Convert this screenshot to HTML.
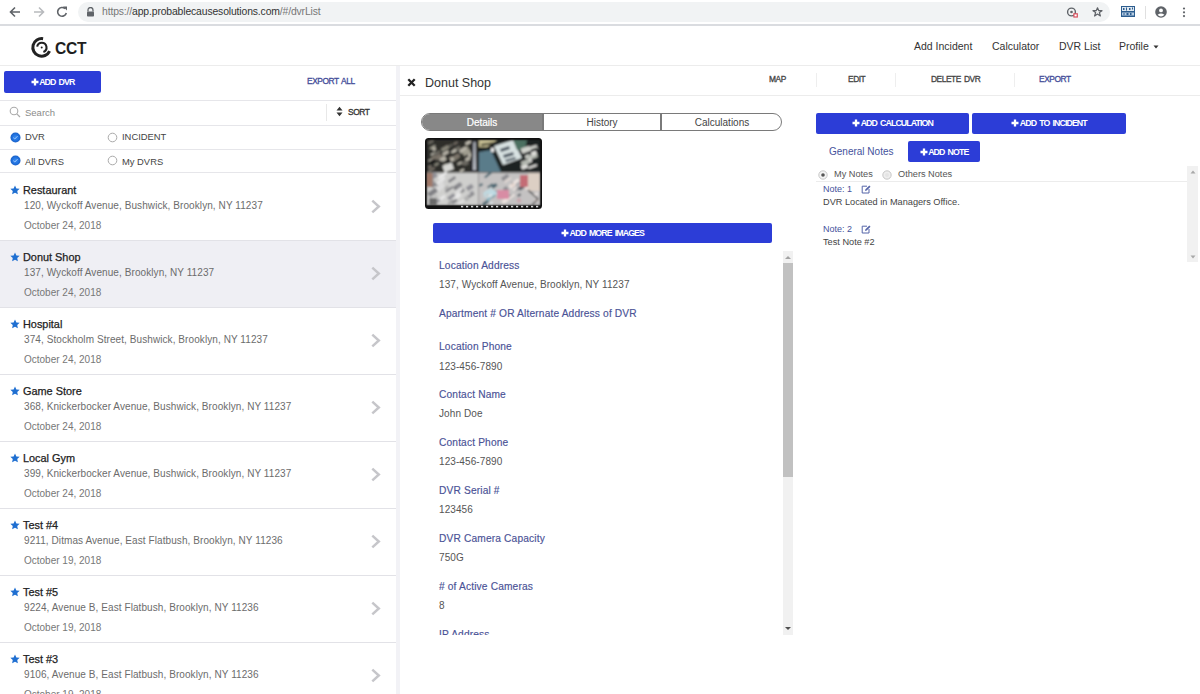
<!DOCTYPE html>
<html><head><meta charset="utf-8">
<style>
*{box-sizing:border-box;margin:0;padding:0}
html,body{width:1200px;height:694px;overflow:hidden;background:#fff;font-family:"Liberation Sans",sans-serif;color:#333}
.a{position:absolute;white-space:nowrap}
.hl{position:absolute;height:1px;background:#e6e6ea}
.vl{position:absolute;width:1px;background:#e8e8e8}
.btn{position:absolute;background:#2c3dd7;border-radius:2px;color:#fff;font-weight:bold;font-size:8.8px;text-align:center;letter-spacing:-0.92px;word-spacing:1.6px}
.pls{display:inline-block;margin-right:0.5px;vertical-align:-0.5px}
.row{position:absolute;left:0;width:396px;height:67px;border-bottom:1.5px solid #e2e2e7}
.row .star{position:absolute;left:10px;top:11px;width:10px;height:10px}
.row .nm{position:absolute;left:23px;top:10px;font-size:10.9px;color:#222;white-space:nowrap;-webkit-text-stroke:0.25px #222}
.row .ad{position:absolute;left:24px;top:26px;font-size:10px;letter-spacing:0.08px;color:#6c6c6c;white-space:nowrap}
.row .dt{position:absolute;left:24px;top:46px;font-size:10px;color:#777;white-space:nowrap}
.row .chev{position:absolute;left:370px;top:25px;width:11px;height:15px}
.tab{top:1px;height:16px;line-height:16px;text-align:center;font-size:10px;color:#444}
.lb{position:absolute;left:6px;font-size:10.2px;color:#4a5296;white-space:nowrap;letter-spacing:0.15px;-webkit-text-stroke:0.15px #4a5296}
.vv{position:absolute;left:6px;font-size:10px;color:#555;white-space:nowrap;letter-spacing:0.09px}
.cap{font-size:8.4px;font-weight:normal;letter-spacing:-0.45px;word-spacing:1.2px;-webkit-text-stroke:0.3px currentColor}
</style></head><body>

<!-- browser chrome -->
<div class="a" style="left:0;top:0;width:1200px;height:24px;background:#fff"></div>
<div class="a" style="left:78px;top:2px;width:1032px;height:20px;border-radius:10px;background:#f1f3f4"></div>
<div class="hl" style="left:0;top:24px;width:1200px;height:2px;background:#dadce0"></div>

<!-- app header -->
<div class="a" style="left:55px;top:40px;font-size:15.6px;font-weight:bold;color:#1e1e1e;letter-spacing:-0.3px">CCT</div>
<div class="a" style="left:914px;top:40px;font-size:10.5px;color:#333">Add Incident</div>
<div class="a" style="left:992px;top:40px;font-size:10.5px;color:#333">Calculator</div>
<div class="a" style="left:1059px;top:40px;font-size:10.5px;color:#333">DVR List</div>
<div class="a" style="left:1119px;top:40px;font-size:10.5px;color:#333">Profile</div>
<div class="hl" style="left:0;top:65px;width:1200px;background:#ececec"></div>

<!-- left panel -->
<div class="btn" style="left:4px;top:71px;width:97px;height:22px;line-height:22px"><svg class="pls" width="8" height="8" viewBox="0 0 8 8"><path d="M4 0.5V7.5M0.5 4H7.5" stroke="#fff" stroke-width="2.3"/></svg>ADD DVR</div>
<div class="a cap" style="left:307px;top:76px;color:#434c98">EXPORT ALL</div>
<div class="hl" style="left:0;top:100px;width:396px"></div>
<div class="a" style="left:25px;top:107px;font-size:9.5px;color:#8a8a8a">Search</div>
<div class="vl" style="left:326px;top:104px;height:17px"></div>
<div class="a cap" style="left:348px;top:107px;color:#333">SORT</div>
<div class="hl" style="left:0;top:125px;width:396px"></div>
<div class="a" style="left:25px;top:131px;font-size:9.4px;color:#444">DVR</div>
<div class="a" style="left:122px;top:131px;font-size:9.4px;color:#444">INCIDENT</div>
<div class="hl" style="left:0;top:149px;width:396px"></div>
<div class="a" style="left:25px;top:156px;font-size:9.4px;color:#444">All DVRS</div>
<div class="a" style="left:122px;top:156px;font-size:9.4px;color:#444">My DVRS</div>
<div class="hl" style="left:0;top:172px;width:396px"></div>

<div id="list">
<div class="row" style="top:174px;background:#fff"><svg class="star" viewBox="0 0 10 10"><path d="M5.00 0.40L6.38 3.40L9.66 3.79L7.23 6.03L7.88 9.26L5.00 7.65L2.12 9.26L2.77 6.03L0.34 3.79L3.62 3.40Z" fill="#1f6fd1"/></svg><div class="nm">Restaurant</div><div class="ad">120, Wyckoff Avenue, Bushwick, Brooklyn, NY 11237</div><div class="dt">October 24, 2018</div><svg class="chev" viewBox="0 0 11 15"><path d="M2.3 1.6L8.8 7.5L2.3 13.4" fill="none" stroke="#c6c6ca" stroke-width="2.5"/></svg></div>
<div class="row" style="top:241px;background:#efeff4;width:400px"><svg class="star" viewBox="0 0 10 10"><path d="M5.00 0.40L6.38 3.40L9.66 3.79L7.23 6.03L7.88 9.26L5.00 7.65L2.12 9.26L2.77 6.03L0.34 3.79L3.62 3.40Z" fill="#1f6fd1"/></svg><div class="nm">Donut Shop</div><div class="ad">137, Wyckoff Avenue, Brooklyn, NY 11237</div><div class="dt">October 24, 2018</div><svg class="chev" viewBox="0 0 11 15"><path d="M2.3 1.6L8.8 7.5L2.3 13.4" fill="none" stroke="#c6c6ca" stroke-width="2.5"/></svg></div>
<div class="row" style="top:308px;background:#fff"><svg class="star" viewBox="0 0 10 10"><path d="M5.00 0.40L6.38 3.40L9.66 3.79L7.23 6.03L7.88 9.26L5.00 7.65L2.12 9.26L2.77 6.03L0.34 3.79L3.62 3.40Z" fill="#1f6fd1"/></svg><div class="nm">Hospital</div><div class="ad">374, Stockholm Street, Bushwick, Brooklyn, NY 11237</div><div class="dt">October 24, 2018</div><svg class="chev" viewBox="0 0 11 15"><path d="M2.3 1.6L8.8 7.5L2.3 13.4" fill="none" stroke="#c6c6ca" stroke-width="2.5"/></svg></div>
<div class="row" style="top:375px;background:#fff"><svg class="star" viewBox="0 0 10 10"><path d="M5.00 0.40L6.38 3.40L9.66 3.79L7.23 6.03L7.88 9.26L5.00 7.65L2.12 9.26L2.77 6.03L0.34 3.79L3.62 3.40Z" fill="#1f6fd1"/></svg><div class="nm">Game Store</div><div class="ad">368, Knickerbocker Avenue, Bushwick, Brooklyn, NY 11237</div><div class="dt">October 24, 2018</div><svg class="chev" viewBox="0 0 11 15"><path d="M2.3 1.6L8.8 7.5L2.3 13.4" fill="none" stroke="#c6c6ca" stroke-width="2.5"/></svg></div>
<div class="row" style="top:442px;background:#fff"><svg class="star" viewBox="0 0 10 10"><path d="M5.00 0.40L6.38 3.40L9.66 3.79L7.23 6.03L7.88 9.26L5.00 7.65L2.12 9.26L2.77 6.03L0.34 3.79L3.62 3.40Z" fill="#1f6fd1"/></svg><div class="nm">Local Gym</div><div class="ad">399, Knickerbocker Avenue, Bushwick, Brooklyn, NY 11237</div><div class="dt">October 24, 2018</div><svg class="chev" viewBox="0 0 11 15"><path d="M2.3 1.6L8.8 7.5L2.3 13.4" fill="none" stroke="#c6c6ca" stroke-width="2.5"/></svg></div>
<div class="row" style="top:509px;background:#fff"><svg class="star" viewBox="0 0 10 10"><path d="M5.00 0.40L6.38 3.40L9.66 3.79L7.23 6.03L7.88 9.26L5.00 7.65L2.12 9.26L2.77 6.03L0.34 3.79L3.62 3.40Z" fill="#1f6fd1"/></svg><div class="nm">Test #4</div><div class="ad">9211, Ditmas Avenue, East Flatbush, Brooklyn, NY 11236</div><div class="dt">October 19, 2018</div><svg class="chev" viewBox="0 0 11 15"><path d="M2.3 1.6L8.8 7.5L2.3 13.4" fill="none" stroke="#c6c6ca" stroke-width="2.5"/></svg></div>
<div class="row" style="top:576px;background:#fff"><svg class="star" viewBox="0 0 10 10"><path d="M5.00 0.40L6.38 3.40L9.66 3.79L7.23 6.03L7.88 9.26L5.00 7.65L2.12 9.26L2.77 6.03L0.34 3.79L3.62 3.40Z" fill="#1f6fd1"/></svg><div class="nm">Test #5</div><div class="ad">9224, Avenue B, East Flatbush, Brooklyn, NY 11236</div><div class="dt">October 19, 2018</div><svg class="chev" viewBox="0 0 11 15"><path d="M2.3 1.6L8.8 7.5L2.3 13.4" fill="none" stroke="#c6c6ca" stroke-width="2.5"/></svg></div>
<div class="row" style="top:643px;background:#fff"><svg class="star" viewBox="0 0 10 10"><path d="M5.00 0.40L6.38 3.40L9.66 3.79L7.23 6.03L7.88 9.26L5.00 7.65L2.12 9.26L2.77 6.03L0.34 3.79L3.62 3.40Z" fill="#1f6fd1"/></svg><div class="nm">Test #3</div><div class="ad">9106, Avenue B, East Flatbush, Brooklyn, NY 11236</div><div class="dt">October 19, 2018</div><svg class="chev" viewBox="0 0 11 15"><path d="M2.3 1.6L8.8 7.5L2.3 13.4" fill="none" stroke="#c6c6ca" stroke-width="2.5"/></svg></div>
</div>

<!-- divider strip -->
<div class="a" style="left:396px;top:66px;width:4px;height:628px;background:#f2f2f6"></div>

<!-- right header -->
<div class="a" style="left:425px;top:76px;font-size:12.5px;color:#333">Donut Shop</div>
<div class="a cap" style="left:769px;top:74px;color:#444">MAP</div>
<div class="a cap" style="left:848px;top:74px;color:#444">EDIT</div>
<div class="a cap" style="left:931px;top:74px;color:#444">DELETE DVR</div>
<div class="a cap" style="left:1039px;top:74px;color:#434c98">EXPORT</div>
<div class="hl" style="left:400px;top:95px;width:800px;background:#ececec"></div>

<!-- tabs -->
<div class="a" style="left:421px;top:113px;width:361px;height:18px;border:1.5px solid #7a7a7a;border-radius:9px;overflow:hidden;background:#fff">
 <div class="a" style="left:0;top:0;width:120px;height:16px;background:#888"></div>
 <div class="a" style="left:238px;top:0;width:1.5px;height:16px;background:#7a7a7a"></div>
 <div class="a" style="left:120px;top:0;width:1.5px;height:16px;background:#7a7a7a"></div>
 <div class="a tab" style="left:0;width:120px;color:#fff;-webkit-text-stroke:0.2px #fff">Details</div>
 <div class="a tab" style="left:120px;width:120px">History</div>
 <div class="a tab" style="left:240px;width:120px">Calculations</div>
</div>

<!-- image -->
<svg class="a" style="left:425px;top:138px" width="117" height="71" viewBox="0 0 117 71">
 <defs><clipPath id="cp"><rect x="0" y="0" width="117" height="71" rx="3.5"/></clipPath>
 <clipPath id="cq"><rect x="1.5" y="1.5" width="114" height="66"/></clipPath>
 <filter id="bl"><feGaussianBlur stdDeviation="0.85"/></filter></defs>
 <g clip-path="url(#cp)">
 <rect width="117" height="71" fill="#111"/>
 <g clip-path="url(#cq)"><g filter="url(#bl)">
 <rect x="1.5" y="1.5" width="52" height="33" fill="#2e2e2b"/><rect x="53.5" y="1.5" width="62" height="33" fill="#1e2022"/><rect x="1.5" y="34.5" width="52" height="33" fill="#cfcfcd"/><rect x="53.5" y="34.5" width="62" height="33" fill="#c4c2c2"/><rect x="28.3" y="4.2" width="4.6" height="1.9" fill="#7c746a" transform="rotate(-30 30.6 5.1)"/><rect x="39.8" y="8.2" width="3.5" height="3.2" fill="#8a887c" transform="rotate(-30 41.5 9.8)"/><rect x="5.6" y="14.9" width="5.2" height="1.7" fill="#c8c4b8" transform="rotate(-30 8.2 15.7)"/><rect x="26.7" y="18.2" width="5.8" height="4.2" fill="#8a887c" transform="rotate(-30 29.6 20.3)"/><rect x="40.2" y="3.4" width="5.9" height="2.7" fill="#c8c4b8" transform="rotate(-30 43.1 4.7)"/><rect x="24.3" y="18.7" width="3.7" height="2.7" fill="#7c746a" transform="rotate(-30 26.2 20.1)"/><rect x="24.1" y="21.2" width="7.1" height="2.0" fill="#6a6860" transform="rotate(-30 27.6 22.2)"/><rect x="25.4" y="19.6" width="3.5" height="3.6" fill="#b8b4a8" transform="rotate(-30 27.2 21.4)"/><rect x="14.1" y="19.1" width="6.4" height="2.7" fill="#b8b4a8" transform="rotate(-30 17.3 20.5)"/><rect x="9.2" y="25.2" width="4.8" height="2.2" fill="#8a887c" transform="rotate(-30 11.6 26.3)"/><rect x="36.2" y="23.1" width="5.9" height="3.0" fill="#6a6860" transform="rotate(-30 39.2 24.6)"/><rect x="21.9" y="7.0" width="6.0" height="1.7" fill="#6a6860" transform="rotate(-30 25.0 7.9)"/><rect x="3.6" y="21.4" width="3.8" height="2.9" fill="#c8c4b8" transform="rotate(-30 5.5 22.9)"/><rect x="34.1" y="11.6" width="5.8" height="3.8" fill="#6a6860" transform="rotate(-30 37.0 13.5)"/><rect x="19.8" y="26.2" width="6.0" height="3.2" fill="#6a6860" transform="rotate(-30 22.8 27.8)"/><rect x="4.4" y="22.0" width="5.4" height="3.4" fill="#141414" transform="rotate(-30 7.1 23.8)"/><rect x="19.4" y="22.4" width="5.9" height="3.5" fill="#141414" transform="rotate(-30 22.4 24.2)"/><rect x="16.3" y="19.0" width="4.7" height="4.2" fill="#b8b4a8" transform="rotate(-30 18.7 21.1)"/><rect x="7.4" y="9.0" width="3.3" height="3.7" fill="#b8b4a8" transform="rotate(-30 9.0 10.9)"/><rect x="8.2" y="13.7" width="7.6" height="2.9" fill="#6a6860" transform="rotate(-30 12.0 15.1)"/><rect x="34.5" y="9.8" width="7.4" height="3.9" fill="#b8b4a8" transform="rotate(-30 38.2 11.8)"/><rect x="16.1" y="8.6" width="7.9" height="3.5" fill="#8a887c" transform="rotate(-30 20.1 10.3)"/><rect x="11.6" y="16.5" width="3.9" height="2.2" fill="#7c746a" transform="rotate(-30 13.5 17.6)"/><rect x="8.0" y="17.9" width="3.9" height="2.3" fill="#7c746a" transform="rotate(-30 9.9 19.0)"/><rect x="29.0" y="16.3" width="5.8" height="4.3" fill="#7c746a" transform="rotate(-30 32.0 18.4)"/><rect x="19.7" y="26.7" width="6.3" height="3.6" fill="#c8c4b8" transform="rotate(-30 22.8 28.5)"/><rect x="17.4" y="13.4" width="6.4" height="3.1" fill="#b8b4a8" transform="rotate(-30 20.6 14.9)"/><rect x="4.6" y="8.3" width="6.2" height="1.7" fill="#a09e90" transform="rotate(-30 7.7 9.2)"/><rect x="6.2" y="18.3" width="3.5" height="3.2" fill="#7c746a" transform="rotate(-30 8.0 19.9)"/><rect x="3.1" y="27.7" width="3.5" height="2.6" fill="#7c746a" transform="rotate(-30 4.8 29.0)"/><rect x="40.3" y="19.3" width="4.9" height="3.3" fill="#b8b4a8" transform="rotate(-30 42.8 20.9)"/><rect x="43.1" y="15.1" width="3.6" height="4.0" fill="#b8b4a8" transform="rotate(-30 44.9 17.0)"/><rect x="32.3" y="24.3" width="4.6" height="1.9" fill="#b8b4a8" transform="rotate(-30 34.6 25.2)"/><rect x="2.9" y="30.6" width="7.1" height="2.0" fill="#7c746a" transform="rotate(-30 6.4 31.5)"/><rect x="38.7" y="23.6" width="4.8" height="3.5" fill="#6a6860" transform="rotate(-30 41.1 25.4)"/><rect x="27.8" y="9.3" width="7.9" height="4.0" fill="#6a6860" transform="rotate(-30 31.8 11.3)"/><rect x="10.3" y="18.0" width="7.5" height="2.5" fill="#7c746a" transform="rotate(-30 14.1 19.2)"/><rect x="34.7" y="31.4" width="4.6" height="2.1" fill="#c8c4b8" transform="rotate(-30 37.1 32.5)"/><rect x="18.4" y="25.9" width="4.0" height="2.2" fill="#a09e90" transform="rotate(-30 20.4 27.0)"/><rect x="3.1" y="2.8" width="5.6" height="2.5" fill="#6a6860" transform="rotate(-30 5.9 4.1)"/><rect x="26.0" y="12.3" width="5.4" height="2.1" fill="#c8c4b8" transform="rotate(-30 28.7 13.3)"/><rect x="37.6" y="12.1" width="7.7" height="4.4" fill="#a09e90" transform="rotate(-30 41.5 14.3)"/><rect x="18" y="26" width="10" height="7" fill="#d8d8d4" transform="rotate(-20 23 29)"/><path d="M47 2L51 2L53 34L45 34Z" fill="#2a2c30"/><path d="M48.5 4L50.5 4L51 32L48 32Z" fill="#b8bcc4"/><path d="M54 2L72 2L62 9L54 9Z" fill="#c8c094"/><path d="M56 6L70 4L68 6L56 8Z" fill="#2a2a20"/><path d="M54 14L66 12L76 34L54 34Z" fill="#5a7c8a"/><path d="M69 8L88 2L97 20L78 27Z" fill="#d8e2e2"/><path d="M75 11L84 8L85 11L76 14Z M78 17L88 14L89 17L79 20Z M80 22L90 19L91 21L81 24Z" fill="#4a5560"/><path d="M88 2L102 2L100 12L92 12Z" fill="#4c7060"/><rect x="66" y="10" width="3" height="4" fill="#e8e8e8"/><rect x="100.2" y="16.8" width="4.6" height="3.6" fill="#d0d2cc" transform="rotate(-20 102.5 18.6)"/><rect x="105.5" y="7.8" width="6.9" height="4.3" fill="#d0d2cc" transform="rotate(-20 108.9 10.0)"/><rect x="102.9" y="16.2" width="9.5" height="4.7" fill="#b4b8b0" transform="rotate(-20 107.6 18.5)"/><rect x="96.2" y="26.6" width="6.6" height="4.2" fill="#e0e0dc" transform="rotate(-20 99.5 28.7)"/><rect x="96.1" y="9.4" width="6.8" height="4.6" fill="#b4b8b0" transform="rotate(-20 99.5 11.7)"/><rect x="102.4" y="20.4" width="4.2" height="4.1" fill="#e0e0dc" transform="rotate(-20 104.5 22.4)"/><rect x="101.6" y="9.0" width="7.9" height="3.2" fill="#d0d2cc" transform="rotate(-20 105.6 10.6)"/><rect x="96.2" y="22.1" width="8.8" height="4.5" fill="#b4b8b0" transform="rotate(-20 100.5 24.4)"/><rect x="106.1" y="10.4" width="6.6" height="5.1" fill="#101214" transform="rotate(-20 109.4 12.9)"/><rect x="106.2" y="13.3" width="5.3" height="3.8" fill="#e0e0dc" transform="rotate(-20 108.9 15.1)"/><rect x="103.1" y="27.4" width="9.0" height="2.2" fill="#e0e0dc" transform="rotate(-20 107.6 28.5)"/><rect x="96.4" y="9.2" width="9.0" height="5.1" fill="#d0d2cc" transform="rotate(-20 100.9 11.7)"/><rect x="26.9" y="56.3" width="9.1" height="4.6" fill="#e8e8e8" transform="rotate(-35 31.4 58.6)"/><rect x="35.2" y="50.9" width="4.2" height="3.4" fill="#808084" transform="rotate(-35 37.3 52.6)"/><rect x="22.4" y="57.0" width="7.8" height="3.6" fill="#909096" transform="rotate(-35 26.3 58.8)"/><rect x="4.0" y="37.9" width="3.4" height="2.3" fill="#dcdcdc" transform="rotate(-35 5.7 39.0)"/><rect x="41.3" y="47.2" width="6.9" height="4.5" fill="#909096" transform="rotate(-35 44.8 49.4)"/><rect x="10.0" y="42.8" width="9.8" height="3.9" fill="#909096" transform="rotate(-35 14.9 44.7)"/><rect x="42.7" y="55.0" width="6.7" height="3.4" fill="#808084" transform="rotate(-35 46.1 56.7)"/><rect x="10.2" y="47.1" width="9.5" height="5.1" fill="#dcdcdc" transform="rotate(-35 14.9 49.6)"/><rect x="5.3" y="41.9" width="3.9" height="3.3" fill="#9a9a9a" transform="rotate(-35 7.3 43.5)"/><rect x="7.6" y="57.8" width="4.5" height="2.7" fill="#b0b0b0" transform="rotate(-35 9.8 59.1)"/><rect x="12.8" y="39.0" width="7.5" height="3.0" fill="#dcdcdc" transform="rotate(-35 16.5 40.5)"/><rect x="20.1" y="48.0" width="4.5" height="5.3" fill="#b0b0b0" transform="rotate(-35 22.4 50.7)"/><rect x="19.8" y="50.4" width="8.8" height="2.1" fill="#808084" transform="rotate(-35 24.2 51.5)"/><rect x="6.1" y="45.6" width="5.9" height="2.9" fill="#808084" transform="rotate(-35 9.0 47.1)"/><rect x="2.8" y="44.5" width="6.9" height="3.3" fill="#909096" transform="rotate(-35 6.2 46.2)"/><rect x="7.1" y="59.5" width="5.1" height="5.3" fill="#e8e8e8" transform="rotate(-35 9.6 62.2)"/><rect x="12.7" y="36.2" width="9.8" height="1.9" fill="#f0f0f0" transform="rotate(-35 17.6 37.2)"/><rect x="39.5" y="58.3" width="4.3" height="4.5" fill="#b0b0b0" transform="rotate(-35 41.6 60.6)"/><rect x="8.2" y="62.1" width="8.7" height="2.5" fill="#909096" transform="rotate(-35 12.5 63.4)"/><rect x="14.1" y="58.3" width="6.5" height="2.8" fill="#e8e8e8" transform="rotate(-35 17.4 59.7)"/><rect x="43.3" y="54.2" width="6.0" height="1.8" fill="#f0f0f0" transform="rotate(-35 46.3 55.1)"/><rect x="12.0" y="42.4" width="4.8" height="3.9" fill="#9a9a9a" transform="rotate(-35 14.5 44.4)"/><rect x="26.2" y="62.0" width="6.2" height="2.9" fill="#808084" transform="rotate(-35 29.3 63.4)"/><rect x="32.3" y="63.5" width="7.4" height="1.7" fill="#e8e8e8" transform="rotate(-35 35.9 64.3)"/><rect x="44.1" y="53.7" width="4.8" height="2.2" fill="#909096" transform="rotate(-35 46.5 54.8)"/><rect x="22.8" y="40.2" width="8.3" height="2.7" fill="#808084" transform="rotate(-35 27.0 41.5)"/><rect x="3.5" y="35.5" width="8.6" height="5.5" fill="#909096" transform="rotate(-35 7.8 38.2)"/><rect x="22.5" y="62.8" width="6.9" height="2.3" fill="#9a9a9a" transform="rotate(-35 25.9 63.9)"/><rect x="29.8" y="50.2" width="7.6" height="4.1" fill="#dcdcdc" transform="rotate(-35 33.6 52.3)"/><rect x="10.7" y="41.7" width="9.8" height="2.7" fill="#e8e8e8" transform="rotate(-35 15.5 43.1)"/><rect x="28.2" y="46.2" width="8.8" height="4.3" fill="#808084" transform="rotate(-35 32.6 48.4)"/><rect x="2.6" y="52.0" width="9.9" height="4.8" fill="#808084" transform="rotate(-35 7.5 54.4)"/><rect x="31.3" y="46.5" width="6.0" height="1.7" fill="#909096" transform="rotate(-35 34.3 47.4)"/><rect x="12.2" y="43.6" width="7.7" height="2.6" fill="#dcdcdc" transform="rotate(-35 16.1 44.9)"/><rect x="1.5" y="35" width="6" height="14" fill="#a07868"/><rect x="4" y="60" width="8" height="7" fill="#6a6a6a"/><rect x="54.1" y="45.9" width="3.7" height="2.1" fill="#40606c" transform="rotate(-35 55.9 46.9)"/><rect x="57.2" y="63.2" width="6.9" height="2.8" fill="#40606c" transform="rotate(-35 60.6 64.6)"/><rect x="59.4" y="37.5" width="3.9" height="1.9" fill="#40606c" transform="rotate(-35 61.3 38.5)"/><rect x="61.6" y="35.1" width="5.0" height="2.0" fill="#40606c" transform="rotate(-35 64.1 36.1)"/><rect x="62.1" y="46.9" width="6.3" height="1.8" fill="#40606c" transform="rotate(-35 65.2 47.8)"/><rect x="63.2" y="50.9" width="4.2" height="2.0" fill="#c0dce4" transform="rotate(-35 65.4 51.9)"/><rect x="66.6" y="46.2" width="5.6" height="3.2" fill="#40606c" transform="rotate(-35 69.4 47.8)"/><rect x="58.0" y="53.2" width="5.9" height="2.7" fill="#c0dce4" transform="rotate(-35 61.0 54.5)"/><rect x="69.0" y="52.9" width="3.2" height="3.5" fill="#6c94a0" transform="rotate(-35 70.6 54.6)"/><rect x="62.3" y="59.4" width="3.6" height="2.7" fill="#8cb4c0" transform="rotate(-35 64.1 60.8)"/><rect x="66.2" y="54.9" width="6.3" height="2.9" fill="#c0dce4" transform="rotate(-35 69.4 56.3)"/><rect x="64.6" y="64.2" width="3.3" height="1.6" fill="#e4f0f4" transform="rotate(-35 66.3 65.0)"/><rect x="62.6" y="53.3" width="6.3" height="2.8" fill="#c0dce4" transform="rotate(-35 65.7 54.7)"/><rect x="66.0" y="57.8" width="5.0" height="1.5" fill="#6c94a0" transform="rotate(-35 68.5 58.6)"/><rect x="61.1" y="57.6" width="6.6" height="1.7" fill="#e4f0f4" transform="rotate(-35 64.3 58.4)"/><rect x="58.2" y="57.1" width="4.0" height="1.7" fill="#c0dce4" transform="rotate(-35 60.3 58.0)"/><rect x="61.4" y="59.5" width="3.9" height="3.0" fill="#8cb4c0" transform="rotate(-35 63.4 61.0)"/><rect x="65.6" y="52.8" width="4.9" height="3.1" fill="#c0dce4" transform="rotate(-35 68.0 54.4)"/><rect x="83.6" y="57.4" width="3.4" height="1.9" fill="#545c64" transform="rotate(-35 85.2 58.3)"/><rect x="90.8" y="49.6" width="6.1" height="1.9" fill="#8c8c90" transform="rotate(-35 93.9 50.6)"/><rect x="92.4" y="56.2" width="3.5" height="2.1" fill="#545c64" transform="rotate(-35 94.1 57.2)"/><rect x="78.2" y="61.0" width="5.3" height="2.9" fill="#a4a4a8" transform="rotate(-35 80.9 62.5)"/><rect x="91.2" y="43.8" width="4.6" height="1.7" fill="#dcd4d0" transform="rotate(-35 93.5 44.6)"/><rect x="89.2" y="42.4" width="7.1" height="4.3" fill="#a4a4a8" transform="rotate(-35 92.8 44.6)"/><rect x="76.5" y="37.5" width="7.6" height="4.2" fill="#8c8c90" transform="rotate(-35 80.3 39.6)"/><rect x="78.7" y="57.8" width="5.6" height="4.3" fill="#c8a4ac" transform="rotate(-35 81.5 59.9)"/><rect x="87.4" y="50.0" width="4.4" height="1.8" fill="#ece4e0" transform="rotate(-35 89.6 50.9)"/><rect x="108.2" y="55.5" width="5.0" height="2.0" fill="#ece4e0" transform="rotate(-35 110.7 56.5)"/><rect x="86.6" y="44.5" width="4.5" height="1.9" fill="#e8d8d0" transform="rotate(-35 88.8 45.5)"/><rect x="86.3" y="46.8" width="4.7" height="2.4" fill="#a4a4a8" transform="rotate(-35 88.6 48.0)"/><rect x="84.0" y="45.4" width="6.6" height="4.1" fill="#ece4e0" transform="rotate(-35 87.3 47.4)"/><rect x="76.8" y="60.9" width="5.0" height="4.0" fill="#e8d8d0" transform="rotate(-35 79.2 62.9)"/><rect x="77.7" y="60.3" width="4.4" height="1.6" fill="#545c64" transform="rotate(-35 79.9 61.2)"/><rect x="107.8" y="48.1" width="6.2" height="1.9" fill="#545c64" transform="rotate(-35 110.9 49.1)"/><rect x="109.4" y="61.0" width="3.9" height="2.6" fill="#e8d8d0" transform="rotate(-35 111.4 62.3)"/><rect x="103.9" y="51.3" width="6.8" height="2.7" fill="#a4a4a8" transform="rotate(-35 107.3 52.6)"/><rect x="99.2" y="48.7" width="6.6" height="1.6" fill="#e8d8d0" transform="rotate(-35 102.5 49.5)"/><rect x="92.1" y="60.5" width="3.7" height="4.0" fill="#c8a4ac" transform="rotate(-35 94.0 62.5)"/><rect x="86.8" y="43.7" width="3.6" height="2.9" fill="#8c8c90" transform="rotate(-35 88.7 45.1)"/><rect x="87.9" y="41.8" width="6.7" height="3.4" fill="#ece4e0" transform="rotate(-35 91.3 43.5)"/><rect x="79.9" y="39.7" width="5.8" height="2.6" fill="#a4a4a8" transform="rotate(-35 82.8 41.1)"/><rect x="93.5" y="47.7" width="5.5" height="3.9" fill="#545c64" transform="rotate(-35 96.3 49.7)"/><rect x="78.6" y="40.6" width="8.0" height="2.8" fill="#dcd4d0" transform="rotate(-35 82.6 42.0)"/><rect x="85.9" y="45.6" width="3.9" height="3.1" fill="#e8d8d0" transform="rotate(-35 87.8 47.2)"/><rect x="100.4" y="46.5" width="5.8" height="4.1" fill="#ece4e0" transform="rotate(-35 103.3 48.6)"/><rect x="83.3" y="57.5" width="6.7" height="2.1" fill="#ece4e0" transform="rotate(-35 86.6 58.5)"/><rect x="78.6" y="48.9" width="4.4" height="4.3" fill="#8c8c90" transform="rotate(-35 80.8 51.1)"/><rect x="77.2" y="60.1" width="7.0" height="4.0" fill="#ece4e0" transform="rotate(-35 80.6 62.1)"/><rect x="72" y="52" width="12" height="9" fill="#d88ca4"/><rect x="95" y="37" width="8" height="12" fill="#c46c74"/><rect x="103" y="35" width="12" height="18" fill="#dccfc4"/><path d="M103 52L113 61L107 67" fill="none" stroke="#333" stroke-width="1.1"/>
 </g></g>
 <g fill="#d8d8d8"><rect x="36" y="67.8" width="2.2" height="1.6"/><rect x="41" y="67.8" width="2.2" height="1.6"/><rect x="46" y="67.8" width="2.2" height="1.6"/><rect x="51" y="67.8" width="2.2" height="1.6"/><rect x="56" y="67.8" width="2.2" height="1.6"/><rect x="61" y="67.8" width="2.2" height="1.6"/><rect x="66" y="67.8" width="2.2" height="1.6"/><rect x="71" y="67.8" width="2.2" height="1.6"/><rect x="76" y="67.8" width="2.2" height="1.6"/><rect x="81" y="67.8" width="2.2" height="1.6"/><rect x="86" y="67.8" width="2.2" height="1.6"/><rect x="91" y="67.8" width="2.2" height="1.6"/><rect x="96" y="67.8" width="2.2" height="1.6"/><rect x="101" y="67.8" width="2.2" height="1.6"/><rect x="106" y="67.8" width="2.2" height="1.6"/><rect x="111" y="67.8" width="2.2" height="1.6"/></g>
 </g>
</svg>

<div class="btn" style="left:433px;top:223px;width:339px;height:20px;line-height:20px"><svg class="pls" width="8" height="8" viewBox="0 0 8 8"><path d="M4 0.5V7.5M0.5 4H7.5" stroke="#fff" stroke-width="2.3"/></svg>ADD MORE IMAGES</div>

<!-- details -->
<div class="a" style="left:433px;top:251px;width:361px;height:384px;overflow:hidden">
 <div class="lb" style="top:9px">Location Address</div>
 <div class="vv" style="top:28px">137, Wyckoff Avenue, Brooklyn, NY 11237</div>
 <div class="lb" style="top:57px">Apartment # OR Alternate Address of DVR</div>
 <div class="lb" style="top:90px">Location Phone</div>
 <div class="vv" style="top:110px">123-456-7890</div>
 <div class="lb" style="top:138px">Contact Name</div>
 <div class="vv" style="top:157px">John Doe</div>
 <div class="lb" style="top:186px">Contact Phone</div>
 <div class="vv" style="top:205px">123-456-7890</div>
 <div class="lb" style="top:234px">DVR Serial #</div>
 <div class="vv" style="top:253px">123456</div>
 <div class="lb" style="top:282px">DVR Camera Capacity</div>
 <div class="vv" style="top:301px">750G</div>
 <div class="lb" style="top:330px"># of Active Cameras</div>
 <div class="vv" style="top:349px">8</div>
 <div class="lb" style="top:378px">IP Address</div>
 <!-- scrollbar -->
 <div class="a" style="left:350px;top:0;width:10px;height:384px;background:#f1f1f1"></div>
 <div class="a" style="left:350px;top:12px;width:10px;height:214px;background:#c1c1c1"></div>
 <svg class="a" style="left:351px;top:3px" width="8" height="6"><path d="M1 5L4 2L7 5Z" fill="#a3a3a3"/></svg>
 <svg class="a" style="left:351px;top:375px" width="8" height="6"><path d="M1 1L4 4L7 1Z" fill="#505050"/></svg>
</div>

<!-- right column -->
<div class="btn" style="left:816px;top:113px;width:153px;height:21px;line-height:21px"><svg class="pls" width="8" height="8" viewBox="0 0 8 8"><path d="M4 0.5V7.5M0.5 4H7.5" stroke="#fff" stroke-width="2.3"/></svg>ADD CALCULATION</div>
<div class="btn" style="left:972px;top:113px;width:154px;height:21px;line-height:21px"><svg class="pls" width="8" height="8" viewBox="0 0 8 8"><path d="M4 0.5V7.5M0.5 4H7.5" stroke="#fff" stroke-width="2.3"/></svg>ADD TO INCIDENT</div>
<div class="a" style="left:829px;top:146px;font-size:10px;color:#45529c">General Notes</div>
<div class="btn" style="left:908px;top:141px;width:72px;height:21px;line-height:22px"><svg class="pls" width="8" height="8" viewBox="0 0 8 8"><path d="M4 0.5V7.5M0.5 4H7.5" stroke="#fff" stroke-width="2.3"/></svg>ADD NOTE</div>
<div class="a" style="left:834px;top:169px;font-size:9.2px;color:#555">My Notes</div>
<div class="a" style="left:898px;top:169px;font-size:9.2px;color:#555">Others Notes</div>
<div class="hl" style="left:816px;top:181px;width:371px;background:#ececec"></div>
<div class="a" style="left:823px;top:184px;font-size:9px;color:#45529c">Note: 1</div>
<div class="a" style="left:823px;top:197px;font-size:9.2px;color:#444">DVR Located in Managers Office.</div>
<div class="a" style="left:823px;top:224px;font-size:9px;color:#45529c">Note: 2</div>
<div class="a" style="left:823px;top:237px;font-size:9.2px;color:#444">Test Note #2</div>
<div class="a" style="left:1187px;top:166px;width:11px;height:96px;background:#f1f1f1"></div>

<!-- browser icons -->
<svg class="a" style="left:8px;top:5px" width="14" height="14" viewBox="0 0 14 14"><path d="M12 7H2.5M7 2.5L2.5 7L7 11.5" fill="none" stroke="#5f6368" stroke-width="1.6"/></svg>
<svg class="a" style="left:32px;top:5px" width="14" height="14" viewBox="0 0 14 14"><path d="M2 7H11.5M7 2.5L11.5 7L7 11.5" fill="none" stroke="#b8babd" stroke-width="1.6"/></svg>
<svg class="a" style="left:55px;top:5px" width="14" height="14" viewBox="0 0 14 14"><path d="M11.3 8A4.4 4.4 0 1 1 10 3.6" fill="none" stroke="#5f6368" stroke-width="1.6"/><path d="M8 1.5H12V5.5Z" fill="#5f6368"/></svg>
<svg class="a" style="left:86px;top:7px" width="9" height="10" viewBox="0 0 9 10"><path d="M2 4.5V3A2.5 2.5 0 0 1 7 3V4.5" fill="none" stroke="#5f6368" stroke-width="1.3"/><rect x="1" y="4.5" width="7" height="5" rx="0.8" fill="#5f6368"/></svg>
<div class="a" style="left:102px;top:6px;font-size:10.4px;color:#777;letter-spacing:-0.14px">https://<span style="color:#333">app.probablecausesolutions.com</span>/#/dvrList</div>
<svg class="a" style="left:1066px;top:7px" width="13" height="11" viewBox="0 0 13 11"><circle cx="5.5" cy="5" r="3.9" fill="none" stroke="#5f6368" stroke-width="1.4"/><circle cx="5.5" cy="5" r="1.3" fill="#5f6368"/><rect x="7.3" y="6.2" width="4.6" height="4.4" fill="#d9505e"/><rect x="8.5" y="7.4" width="2.2" height="2" fill="#fff"/></svg>
<svg class="a" style="left:1092px;top:7px" width="11" height="10" viewBox="0 0 11 10"><path d="M5.5 0.8L6.8 3.7H10L7.4 5.6L8.4 9L5.5 7L2.6 9L3.6 5.6L1 3.7H4.2Z" fill="none" stroke="#5f6368" stroke-width="1.2" stroke-linejoin="round"/></svg>
<svg class="a" style="left:1121px;top:6px" width="14" height="11" viewBox="0 0 14 11"><rect x="0" y="0" width="14" height="11" fill="#2c5d8f"/><rect x="1" y="1" width="12" height="4" fill="#dfe8f0"/><path d="M2 2h1.5v2h-1.5zM5 1.5h1v3h-1zM8 2h1.5v2h-1.5zM11 1.5h1v2h-1z" fill="#2c5d8f"/><rect x="1" y="6.5" width="12" height="3" fill="#b7cde2"/><path d="M2.5 7h1v2h-1zM5.5 7h2v2h-2zM9 7h1.5v2h-1.5z" fill="#2c5d8f"/></svg>
<div class="a" style="left:1145px;top:6px;width:1px;height:13px;background:#e0e0e0"></div>
<svg class="a" style="left:1155px;top:6px" width="12" height="12" viewBox="0 0 12 12"><circle cx="6" cy="6" r="5.8" fill="#5f6368"/><circle cx="6" cy="4.4" r="1.9" fill="#fff"/><path d="M2.6 8.8Q6 6.4 9.4 8.8Q8 10.4 6 10.4Q4 10.4 2.6 8.8Z" fill="#fff"/></svg>
<svg class="a" style="left:1182px;top:7px" width="4" height="11" viewBox="0 0 4 11"><circle cx="2" cy="1.5" r="1.1" fill="#5f6368"/><circle cx="2" cy="5.3" r="1.1" fill="#5f6368"/><circle cx="2" cy="9.1" r="1.1" fill="#5f6368"/></svg>

<!-- logo -->
<svg class="a" style="left:29px;top:35px" width="24" height="25" viewBox="0 0 24 25">
 <path d="M14.1 3.7A8.8 8.8 0 1 0 20.6 16.1" fill="none" stroke="#222" stroke-width="3"/>
 <path d="M8.17 11.7A4.7 4.7 0 1 1 14.4 16.9" fill="none" stroke="#222" stroke-width="2.1"/>
 <circle cx="12.7" cy="12.5" r="1" fill="#222"/>
</svg>
<svg class="a" style="left:1153px;top:45px" width="6" height="4"><path d="M0.5 0.5H5.5L3 3.5Z" fill="#333"/></svg>

<!-- search/sort/radios -->
<svg class="a" style="left:9px;top:106px" width="12" height="12" viewBox="0 0 12 12"><circle cx="5" cy="5" r="3.8" fill="none" stroke="#aaa" stroke-width="1.1"/><path d="M7.8 7.8L11 11" stroke="#aaa" stroke-width="1.2"/></svg>
<svg class="a" style="left:336px;top:106px" width="7" height="11" viewBox="0 0 7 11"><path d="M0.5 4.5L3.5 0.8L6.5 4.5Z M0.5 6.5L3.5 10.2L6.5 6.5Z" fill="#333"/></svg>
<svg class="a" style="left:10px;top:131.5px" width="11" height="11" viewBox="0 0 11 11"><defs><radialGradient id="rg"><stop offset="0" stop-color="#3b8ef2"/><stop offset="0.7" stop-color="#1f6fdc"/><stop offset="1" stop-color="#1a5fc4"/></radialGradient></defs><circle cx="5.5" cy="5.5" r="5" fill="url(#rg)"/><path d="M3.3 5.7L4.8 7L7.6 4.1" fill="none" stroke="#9cc8ff" stroke-width="1"/></svg>
<svg class="a" style="left:10px;top:155px" width="11" height="11" viewBox="0 0 11 11"><circle cx="5.5" cy="5.5" r="5" fill="url(#rg)"/><path d="M3.3 5.7L4.8 7L7.6 4.1" fill="none" stroke="#9cc8ff" stroke-width="1"/></svg>
<svg class="a" style="left:107px;top:131.5px" width="11" height="11" viewBox="0 0 11 11"><circle cx="5.5" cy="5.5" r="4.3" fill="#fff" stroke="#aaa" stroke-width="1"/></svg>
<svg class="a" style="left:107px;top:155px" width="11" height="11" viewBox="0 0 11 11"><circle cx="5.5" cy="5.5" r="4.3" fill="#fff" stroke="#aaa" stroke-width="1"/></svg>

<!-- close x -->
<svg class="a" style="left:407px;top:78px" width="9" height="9" viewBox="0 0 9 9"><path d="M1.3 1.3L7.7 7.7M7.7 1.3L1.3 7.7" stroke="#222" stroke-width="2.3"/></svg>
<div class="a" style="left:816px;top:73px;width:1px;height:14px;background:#eee"></div>
<div class="a" style="left:895px;top:73px;width:1px;height:14px;background:#eee"></div>
<div class="a" style="left:1014px;top:73px;width:1px;height:14px;background:#eee"></div>

<!-- notes radios, edit icons, scrollbar arrows -->
<svg class="a" style="left:818px;top:170px" width="10" height="10" viewBox="0 0 10 10"><circle cx="5" cy="5" r="4.2" fill="#f4f4f4" stroke="#bbb" stroke-width="0.8"/><circle cx="5" cy="5" r="1.8" fill="#555"/></svg>
<svg class="a" style="left:882px;top:170px" width="10" height="10" viewBox="0 0 10 10"><circle cx="5" cy="5" r="4.2" fill="#eee" stroke="#bbb" stroke-width="0.8"/><circle cx="5" cy="5" r="2" fill="#e4e4e4"/></svg>
<svg class="a" style="left:861px;top:185px" width="10" height="9" viewBox="0 0 10 9"><path d="M6 1.2H1.2V8H8V4" fill="none" stroke="#5564a8" stroke-width="1"/><path d="M4 6L4.5 4.3L8.3 0.6L9.5 1.8L5.7 5.6Z" fill="#5564a8"/></svg>
<svg class="a" style="left:861px;top:225px" width="10" height="9" viewBox="0 0 10 9"><path d="M6 1.2H1.2V8H8V4" fill="none" stroke="#5564a8" stroke-width="1"/><path d="M4 6L4.5 4.3L8.3 0.6L9.5 1.8L5.7 5.6Z" fill="#5564a8"/></svg>
<svg class="a" style="left:1190px;top:170px" width="6" height="4"><path d="M0.5 3.5L3 0.5L5.5 3.5Z" fill="#a8a8a8"/></svg>
<svg class="a" style="left:1190px;top:255px" width="6" height="4"><path d="M0.5 0.5L3 3.5L5.5 0.5Z" fill="#a8a8a8"/></svg>

</body></html>
